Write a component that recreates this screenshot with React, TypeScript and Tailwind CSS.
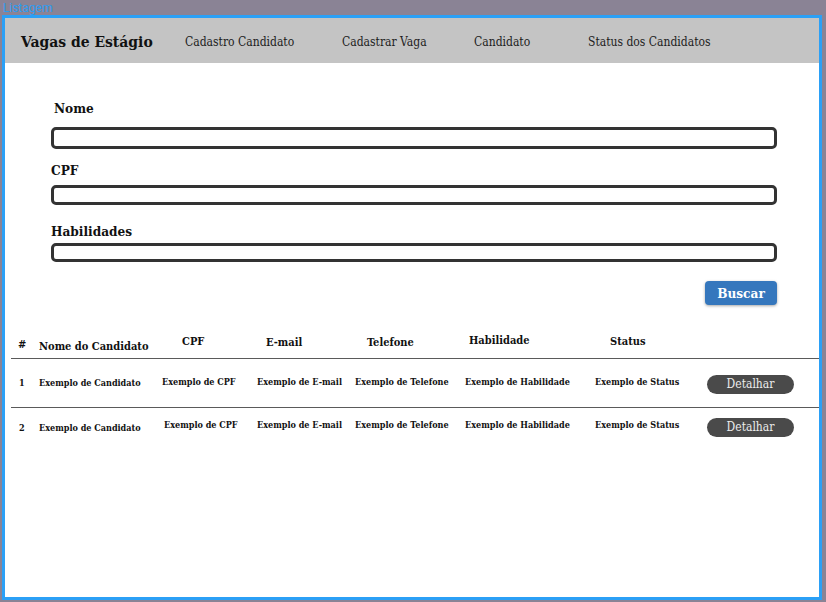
// Listagem de candidatos — wireframe da tela "Vagas de Estágio"

const slab = { fontFamily: '"DejaVu Serif Condensed", "DejaVu Serif", serif' }

type Cell = { text: string; w: string; pl: string; mt: string }

const header: Cell[] = [
  { text: "#", w: "w-[28px]", pl: "pl-[7px]", mt: "mt-[6px]" },
  { text: "Nome do Candidato", w: "w-[111px]", pl: "pl-0", mt: "mt-[8px]" },
  { text: "CPF", w: "w-[100px]", pl: "pl-[32px]", mt: "mt-[3px]" },
  { text: "E-mail", w: "w-[100px]", pl: "pl-[16px]", mt: "mt-[4px]" },
  { text: "Telefone", w: "w-[110px]", pl: "pl-[17px]", mt: "mt-[4px]" },
  { text: "Habilidade", w: "w-[130px]", pl: "pl-[9px]", mt: "mt-[2px]" },
  { text: "Status", w: "w-[110px]", pl: "pl-[20px]", mt: "mt-[3px]" },
]

function row(n: number, mtA: string, mtB: string, cpfPl: string): Cell[] {
  return [
    { text: String(n), w: "w-[28px]", pl: "pl-[8px]", mt: mtA },
    { text: "Exemplo de Candidato", w: "w-[111px]", pl: "pl-0", mt: mtA },
    { text: "Exemplo de CPF", w: "w-[100px]", pl: cpfPl, mt: mtB },
    { text: "Exemplo de E-mail", w: "w-[100px]", pl: "pl-[7px]", mt: mtB },
    { text: "Exemplo de Telefone", w: "w-[110px]", pl: "pl-[5px]", mt: mtB },
    { text: "Exemplo de Habilidade", w: "w-[130px]", pl: "pl-[5px]", mt: mtB },
    { text: "Exemplo de Status", w: "w-[110px]", pl: "pl-[5px]", mt: mtB },
  ]
}

const rows = [
  { cells: row(1, "mt-[18px]", "mt-[17px]", "pl-[12px]"), btn: "mt-[16px]", line: "h-[49px] border-b border-[#5a5a5a]" },
  { cells: row(2, "mt-[14px]", "mt-[11px]", "pl-[14px]"), btn: "mt-[10px]", line: "h-[49px]" },
]

export default function App() {
  return (
    <div className="w-[826px] h-[602px] bg-[#8a8395] overflow-hidden" style={slab}>
      <div
        className="h-[15px] pl-[3px] pt-[1px] text-[12px] leading-[15px] text-[#2c9cf0]"
        style={{ fontFamily: "Roboto, sans-serif" }}
      >
        Listagem
      </div>

      <div className="ml-[2px] w-[820px] h-[585px] border-[3px] border-[#2ba0f6] bg-white">
        {/* barra de navegação */}
        <div className="h-[45px] bg-[#c4c4c4] flex items-center pt-[3px] text-[#1c1c1c]">
          <div className="w-[180px] pl-[16px] text-[15.5px] font-bold text-[#111]">Vagas de Estágio</div>
          <div className="w-[157px] text-[12px]">Cadastro Candidato</div>
          <div className="w-[132px] text-[12px]">Cadastrar Vaga</div>
          <div className="w-[114px] text-[12px]">Candidato</div>
          <div className="text-[12px]">Status dos Candidatos</div>
        </div>

        {/* filtros */}
        <div className="ml-[46px] w-[726px] text-[#111]">
          <div className="mt-[37px] pl-[3px] h-[16px] text-[13.5px] leading-[16px] font-bold">Nome</div>
          <div className="mt-[11px] h-[22px] border-[3px] border-[#333] rounded-[5px]" />
          <div className="mt-[13px] h-[16px] text-[13.5px] leading-[16px] font-bold">CPF</div>
          <div className="mt-[7px] h-[20px] border-[3px] border-[#333] rounded-[5px]" />
          <div className="mt-[18px] h-[16px] text-[13.5px] leading-[16px] font-bold">Habilidades</div>
          <div className="mt-[4px] h-[19px] border-[3px] border-[#333] rounded-[5px]" />
          <div className="mt-[19px] flex justify-end">
            <button className="w-[72px] h-[24px] rounded-[4px] bg-[#3577bd] text-white text-[13.5px] font-bold shadow-[0_1px_3px_rgba(0,0,0,0.35)]">
              Buscar
            </button>
          </div>
        </div>

        {/* tabela */}
        <div className="ml-[6px] mt-[27px] text-[#111]">
          <div className="flex h-[27px] border-b border-[#5a5a5a] text-[11px] leading-[14px] font-bold">
            {header.map((c) => (
              <div key={c.text} className={`${c.w} ${c.pl} ${c.mt} shrink-0 whitespace-nowrap`}>
                {c.text}
              </div>
            ))}
          </div>
          {rows.map((r, i) => (
            <div key={i} className={`flex ${r.line} text-[9px] leading-[12px] font-bold`}>
              {r.cells.map((c, j) => (
                <div key={j} className={`${c.w} ${c.pl} ${c.mt} shrink-0 whitespace-nowrap`}>
                  {c.text}
                </div>
              ))}
              <div className="pl-[7px]">
                <button
                  className={`${r.btn} w-[87px] h-[19px] rounded-full bg-[#4a4a4a] text-[#ececec] text-[12px] leading-[19px] font-normal`}
                >
                  Detalhar
                </button>
              </div>
            </div>
          ))}
        </div>
      </div>
    </div>
  )
}
